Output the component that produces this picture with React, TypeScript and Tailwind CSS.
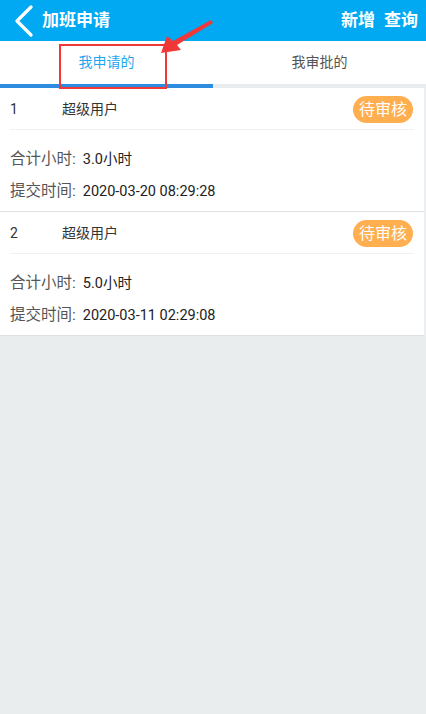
import React from 'react';

interface Record {
  id: number;
  user: string;
  hours: string;
  submitted: string;
}

const records: Record[] = [
  { id: 1, user: '超级用户', hours: '3.0小时', submitted: '2020-03-20 08:29:28' },
  { id: 2, user: '超级用户', hours: '5.0小时', submitted: '2020-03-11 02:29:08' },
];

export default function App() {
  return (
    <div
      className="relative flex min-h-[714px] w-[426px] flex-col bg-[#e9edee]"
      style={{ fontFamily: 'Roboto, "Noto Sans CJK SC", sans-serif' }}
    >
      {/* Header */}
      <div className="flex h-[41px] items-center bg-[#00a9f1] text-white">
        <svg className="ml-[13px] h-[32px] w-[22px]" viewBox="0 0 22 32" fill="none">
          <path d="M18 2 L4 16 L18 30" stroke="white" strokeWidth="3.2" strokeLinecap="round" strokeLinejoin="round" />
        </svg>
        <span className="ml-[7px] text-[17px] font-bold">加班申请</span>
        <div className="ml-auto mr-[8px] flex gap-[9px] text-[17px] font-bold">
          <span>新增</span>
          <span>查询</span>
        </div>
      </div>

      {/* Tabs */}
      <div className="flex bg-white">
        <div className="flex h-[47px] flex-1 items-center justify-center border-b-[4px] border-[#2d8ce0] text-[14px] text-[#1fa6ef]">
          我申请的
        </div>
        <div className="flex h-[47px] flex-1 items-center justify-center border-b-[4px] border-[#e8ecee] text-[14px] text-[#555]">
          我审批的
        </div>
      </div>

      {/* List */}
      <div className="border-r-2 border-[#eceeef]">
        {records.map((r) => (
          <div key={r.id} className="border-b border-[#dfe2e3] bg-white">
            <div className="mx-[10px] flex h-[42px] items-center border-b border-[#eef1f2] pt-[2px] text-[14px] text-[#333]">
              <span className="w-[52px]">{r.id}</span>
              <span>{r.user}</span>
              <span className="ml-auto mr-[1px] flex h-[27px] items-center rounded-full bg-[#ffae50] px-[6px] text-[16px] text-white">
                待审核
              </span>
            </div>
            <div className="px-[10px] pb-[3px] pt-[14px]">
              <div className="flex h-[32px] items-center">
                <span className="text-[15.5px] text-[#555]">合计小时:</span>
                <span className="ml-[7px] text-[14.5px] text-[#222]">{r.hours}</span>
              </div>
              <div className="flex h-[32px] items-center">
                <span className="text-[15.5px] text-[#555]">提交时间:</span>
                <span className="ml-[7px] text-[14.5px] text-[#222]">{r.submitted}</span>
              </div>
            </div>
          </div>
        ))}
      </div>

      {/* Annotation: red box + arrow */}
      <div className="pointer-events-none absolute left-[59px] top-[44px] h-[45px] w-[108px] border-2 border-[#f03838]" />
      <svg className="pointer-events-none absolute left-0 top-0" width="426" height="100">
        <polygon points="161,53 167,36 173,41 211,20 213,23 177,45 181,50" fill="#f03838" />
      </svg>
    </div>
  );
}
